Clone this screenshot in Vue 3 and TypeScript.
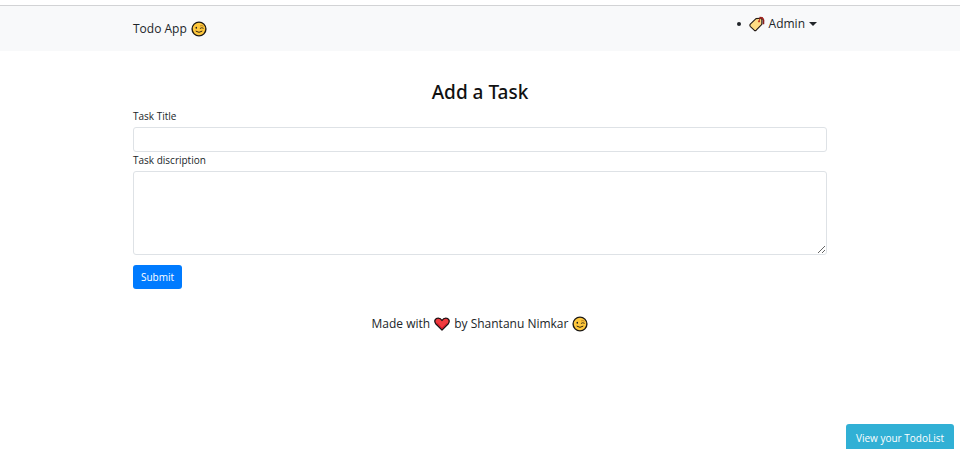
<script setup lang="ts">
import { ref } from 'vue'

const title = ref<string>('')
const description = ref<string>('')

function addTask(): void {
  title.value = ''
  description.value = ''
}
</script>

<template>
  <div class="page">
    <svg class="symbols" aria-hidden="true">
      <symbol id="wink" viewBox="0 0 16 16">
        <circle cx="8" cy="8" r="6.9" fill="#ffc83d" stroke="#1d1a16" stroke-width="1.4" />
        <ellipse cx="5.3" cy="6.7" rx="0.8" ry="1" fill="#1d1a16" />
        <path d="M9.2 7.3 Q10.8 6 12.3 7.1" fill="none" stroke="#33270f" stroke-width="0.9" stroke-linecap="round" />
        <path d="M5 10.3 Q8 12.6 11 10.3" fill="none" stroke="#33270f" stroke-width="1" stroke-linecap="round" />
        <path d="M9.4 4.8 Q11 4 12.2 5" fill="none" stroke="#a46b14" stroke-width="0.7" stroke-linecap="round" />
      </symbol>
      <symbol id="heart" viewBox="0 0 16 16">
        <path d="M8 14 L1.7 7.7 C-0.3 5 1.4 2.1 4.2 2.1 C6 2.1 7.2 3.1 8 4.5 C8.8 3.1 10 2.1 11.8 2.1 C14.6 2.1 16.3 5 14.3 7.7 Z" fill="#f03a3e" stroke="#1d1013" stroke-width="1.3" stroke-linejoin="round" />
        <path d="M3 6.8 L8 12.2 L12.9 7.2" fill="none" stroke="#e0182c" stroke-width="1" />
      </symbol>
      <symbol id="tag" viewBox="0 0 16 16">
        <path d="M10.5 1.5 L13.2 1.9 L14.5 4.2 L14.4 8.2" fill="none" stroke="#8c2020" stroke-width="1.7" stroke-linejoin="round" />
        <path d="M1.3 8.2 L7 2.6 L11.6 2.2 L12.9 3.4 L12.8 8.4 L7.2 14.2 Q6.2 15 5.2 14.2 L1.4 10.6 Q0.4 9.4 1.3 8.2 Z" fill="#ffdc83" stroke="#241a14" stroke-width="1.1" stroke-linejoin="round" />
        <path d="M10.4 4.8 Q10.4 2.2 12.1 1.8 Q13.6 1.7 14.3 3.4" fill="none" stroke="#b92821" stroke-width="1.1" />
        <circle cx="10" cy="5.3" r="1.1" fill="#c63d1f" />
      </symbol>
    </svg>

    <header class="navbar">
      <nav class="container bar">
        <a class="brand" href="#">Todo App <svg class="emoji" role="img" aria-label="Winking face"><use href="#wink" /></svg></a>
        <ul class="menu">
          <li>
            <button class="account" type="button" aria-haspopup="true">
              <svg class="emoji" aria-hidden="true"><use href="#tag" /></svg>
              <span>Admin</span>
              <span class="caret"></span>
            </button>
          </li>
        </ul>
      </nav>
    </header>

    <main class="container">
      <h1>Add a Task</h1>
      <form @submit.prevent="addTask">
        <label for="task-title">Task Title</label>
        <input id="task-title" v-model="title" class="field" type="text" />
        <label for="task-description">Task discription</label>
        <textarea id="task-description" v-model="description" class="field area"></textarea>
        <button class="submit" type="submit">Submit</button>
      </form>
    </main>

    <footer class="credit">
      <span>Made with</span>
      <svg class="emoji" role="img" aria-label="love"><use href="#heart" /></svg>
      <span>by Shantanu Nimkar</span>
      <svg class="emoji" role="img" aria-label="Winking face"><use href="#wink" /></svg>
    </footer>

    <a class="view-list" href="#">View your TodoList</a>
  </div>
</template>

<style>
body {
  margin: 0;
  background: #fff;
}
</style>

<style scoped>
.page {
  padding-top: 5px;
  color: #212529;
  font-family: "Open Sans", "Noto Sans", sans-serif;
  font-size: 12px;
  line-height: 18px;
}

.page *,
.page *::before {
  box-sizing: border-box;
}

.symbols {
  position: absolute;
  width: 0;
  height: 0;
}

.emoji {
  flex: none;
  width: 16px;
  height: 16px;
}

.container {
  width: calc(100% - 32px);
  max-width: 694px;
  margin: 0 auto;
}

.navbar {
  border-top: 1px solid #d2d3d5;
  background: #f8f9fa;
}

.bar {
  display: flex;
  align-items: flex-start;
  justify-content: space-between;
  padding: 9px 0 13px;
}

.brand {
  display: flex;
  align-items: center;
  gap: 4px;
  padding-top: 5px;
  color: #212529;
  line-height: 18px;
  text-decoration: none;
}

.menu {
  margin: 0;
  padding: 0 10px 0 0;
  list-style: none;
}

.menu li {
  display: flex;
  align-items: center;
  gap: 8px;
}

.menu li::before {
  width: 4px;
  height: 4px;
  border-radius: 50%;
  background: #212529;
  content: "";
}

.account {
  display: flex;
  align-items: center;
  gap: 4px;
  padding: 0;
  border: 0;
  background: none;
  color: #212529;
  font: inherit;
}

.caret {
  border-top: 4px solid #212529;
  border-right: 4px solid transparent;
  border-left: 4px solid transparent;
}

h1 {
  margin: 29px 0 4px;
  color: #111;
  font-family: "Noto Sans", "Open Sans", sans-serif;
  font-size: 19px;
  font-weight: 500;
  line-height: 24px;
  text-align: center;
}

form {
  display: flex;
  flex-direction: column;
  align-items: flex-start;
}

label {
  padding-bottom: 3px;
  font-size: 10px;
  line-height: 16px;
}

.field {
  display: block;
  width: 100%;
  height: 25px;
  margin: 0;
  padding: 3px 8px;
  border: 1px solid #dee2e6;
  border-radius: 3px;
  background: #fff;
  color: #495057;
  font: inherit;
}

.area {
  height: 84px;
  resize: vertical;
}

.submit {
  margin-top: 10px;
  padding: 4px 8px;
  border: 0;
  border-radius: 3px;
  background: #007bff;
  color: #fff;
  font: inherit;
  font-size: 10px;
  line-height: 16px;
}

.credit {
  display: flex;
  align-items: center;
  justify-content: center;
  gap: 4px;
  padding-top: 26px;
}

.view-list {
  position: fixed;
  right: 6px;
  bottom: -4px;
  padding: 6px 10px;
  border-radius: 3px;
  background: #31b0d5;
  color: #fff;
  font-size: 10px;
  line-height: 17px;
  text-decoration: none;
}
</style>
